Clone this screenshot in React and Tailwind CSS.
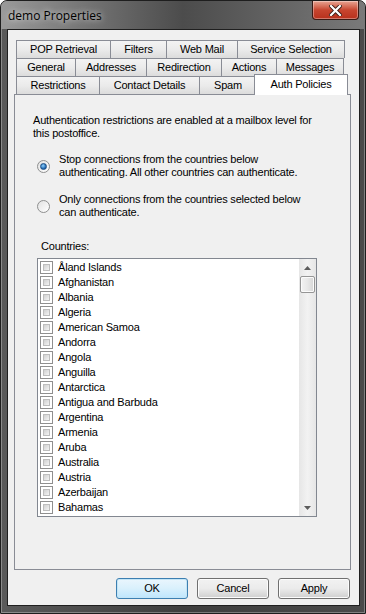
import React from "react";

const rows = [
  [
    ["POP Retrieval", "w-[95px]"],
    ["Filters", "w-[57px]"],
    ["Web Mail", "w-[72px]"],
    ["Service Selection", "w-[108px]"],
  ],
  [
    ["General", "w-[60px]"],
    ["Addresses", "w-[72px]"],
    ["Redirection", "w-[76px]"],
    ["Actions", "w-[56px]"],
    ["Messages", "w-[68px]"],
  ],
];

const countries = [
  "Åland Islands",
  "Afghanistan",
  "Albania",
  "Algeria",
  "American Samoa",
  "Andorra",
  "Angola",
  "Anguilla",
  "Antarctica",
  "Antigua and Barbuda",
  "Argentina",
  "Armenia",
  "Aruba",
  "Australia",
  "Austria",
  "Azerbaijan",
  "Bahamas",
];

function Tab({ label, width }) {
  return (
    <div
      className={`${width} h-[18px] -ml-px first:ml-0 flex items-center justify-center border border-b-0 border-[#898c95] bg-gradient-to-b from-[#f3f3f3] via-[#ebebeb] to-[#dcdcdc] text-black`}
    >
      {label}
    </div>
  );
}

function Radio({ checked }) {
  return (
    <div className="w-[13px] h-[13px] rounded-full border border-[#8e8f8f] bg-gradient-to-br from-[#e2e2e2] to-[#ffffff] flex items-center justify-center shrink-0">
      {checked && (
        <div className="w-[7px] h-[7px] rounded-full bg-[radial-gradient(circle_at_40%_35%,#8bd0ff,#1a5fa8_70%)] border border-[#1c4f86]" />
      )}
    </div>
  );
}

function Check() {
  return (
    <div className="w-[13px] h-[13px] border border-[#8f8f8f] bg-white p-[2px] shrink-0">
      <div className="w-full h-full border border-[#bdbdbd] bg-gradient-to-br from-[#d0d0d0] to-[#f4f4f4]" />
    </div>
  );
}

function Button({ label, primary }) {
  return (
    <div
      className={`w-[72px] h-[21px] rounded-[3px] border flex items-center justify-center ${
        primary
          ? "border-[#3c7fb1] bg-gradient-to-b from-[#eaf6fd] via-[#d9f0fc] to-[#bee6fd] shadow-[inset_0_0_0_1px_#c4e5f6]"
          : "border-[#707070] bg-gradient-to-b from-[#f2f2f2] via-[#ebebeb] to-[#cfcfcf] shadow-[inset_0_0_0_1px_#fcfcfc]"
      }`}
    >
      {label}
    </div>
  );
}

export default function App() {
  return (
    <div
      className="w-[366px] h-[614px] flex flex-col rounded-t-[7px] border border-[#1e1e1e] bg-gradient-to-r from-[#5a5a5a] via-[#3e3e3e] to-[#4a4a4a] overflow-hidden text-[11px] leading-[13px] tracking-[-0.2px] shadow-[inset_0_0_0_1px_rgba(255,255,255,0.3)]"
      style={{ fontFamily: '"Liberation Sans", Arial, sans-serif' }}
    >
      <div className="h-[28px] flex items-start shrink-0 bg-gradient-to-r from-[#9a9a9a] via-[#4c4c4c] to-[#7a7a7a]">
        <div
          className="pt-[7px] pl-[7px] text-[12px] leading-[15px] tracking-normal text-black [text-shadow:0_0_6px_rgba(255,255,255,0.9)]"
          style={{ fontFamily: '"Open Sans", "Noto Sans", sans-serif' }}
        >
          demo Properties
        </div>
        <div className="ml-auto mr-[6px] w-[47px] h-[19px] rounded-b-[4px] border border-t-0 border-[#3a1a14] bg-gradient-to-b from-[#e8a493] via-[#c7452f] to-[#b8301c] flex items-center justify-center shadow-[inset_0_0_0_1px_rgba(255,255,255,0.35)]">
          <svg width="13" height="11" viewBox="0 0 13 11">
            <path d="M2 1 L11 10 M11 1 L2 10" stroke="#3b1b14" strokeWidth="4" strokeLinecap="square" />
            <path d="M2 1 L11 10 M11 1 L2 10" stroke="#ffffff" strokeWidth="2.2" strokeLinecap="square" />
          </svg>
        </div>
      </div>

      <div className="ml-[6px] mr-[5px] flex-1 border border-[#1f1f1f] bg-[#f0f0f0] flex flex-col">
        <div className="pt-[10px] pl-[6px] flex flex-col">
          {rows.map((row, i) => (
            <div key={i} className="flex pl-[2px]">
              {row.map(([label, w]) => (
                <Tab key={label} label={label} width={w} />
              ))}
            </div>
          ))}
          <div className="flex pl-[2px] items-end h-[18px]">
            <Tab label="Restrictions" width="w-[84px]" />
            <Tab label="Contact Details" width="w-[101px]" />
            <Tab label="Spam" width="w-[58px]" />
            <div className="w-[94px] h-[21px] -ml-[3px] -mb-px relative z-10 flex items-start justify-center pt-[3px] border border-b-0 border-[#898c95] bg-white">
              Auth Policies
            </div>
          </div>
          <div className="w-[337px] h-[476px] border border-[#898c95] bg-[#f0f0f0] flex flex-col pl-[18px]">
            <div className="pt-[19px] pr-[20px]">
              Authentication restrictions are enabled at a mailbox level for this postoffice.
            </div>
            <div className="mt-[13px] flex items-center gap-[9px] pl-[4px]">
              <Radio checked />
              <div>
                Stop connections from the countries below
                <br />
                authenticating. All other countries can authenticate.
              </div>
            </div>
            <div className="mt-[14px] flex items-center gap-[9px] pl-[4px]">
              <Radio />
              <div>
                Only connections from the countries selected below
                <br />
                can authenticate.
              </div>
            </div>
            <div className="mt-[21px] pl-[8px]">Countries:</div>
            <div className="mt-[5px] ml-[4px] w-[280px] h-[259px] border border-[#828790] bg-white flex">
              <div className="flex-1 flex flex-col pt-px">
                {countries.map((c) => (
                  <div key={c} className="h-[15px] flex items-center gap-[5px] pl-[2px]">
                    <Check />
                    <span>{c}</span>
                  </div>
                ))}
              </div>
              <div className="w-[17px] h-full bg-gradient-to-r from-[#e6e6e6] via-[#f2f2f2] to-[#e6e6e6] flex flex-col items-center">
                <div className="h-[17px] w-full flex items-center justify-center">
                  <svg width="7" height="4" viewBox="0 0 7 4">
                    <path d="M0 4 L3.5 0 L7 4 Z" fill="#5c5c5c" />
                  </svg>
                </div>
                <div className="w-[15px] h-[17px] rounded-[2px] border border-[#959595] bg-gradient-to-r from-[#f3f3f3] via-[#e8e8e8] to-[#d6d6d6] shadow-[inset_0_0_0_1px_#fbfbfb]" />
                <div className="flex-1" />
                <div className="h-[17px] w-full flex items-center justify-center">
                  <svg width="7" height="4" viewBox="0 0 7 4">
                    <path d="M0 0 L7 0 L3.5 4 Z" fill="#5c5c5c" />
                  </svg>
                </div>
              </div>
            </div>
          </div>
        </div>
        <div className="mt-[8px] flex justify-end gap-[9px] pr-[9px]">
          <Button label="OK" primary />
          <Button label="Cancel" />
          <Button label="Apply" />
        </div>
      </div>
      <div className="h-[7px] shrink-0" />
    </div>
  );
}
